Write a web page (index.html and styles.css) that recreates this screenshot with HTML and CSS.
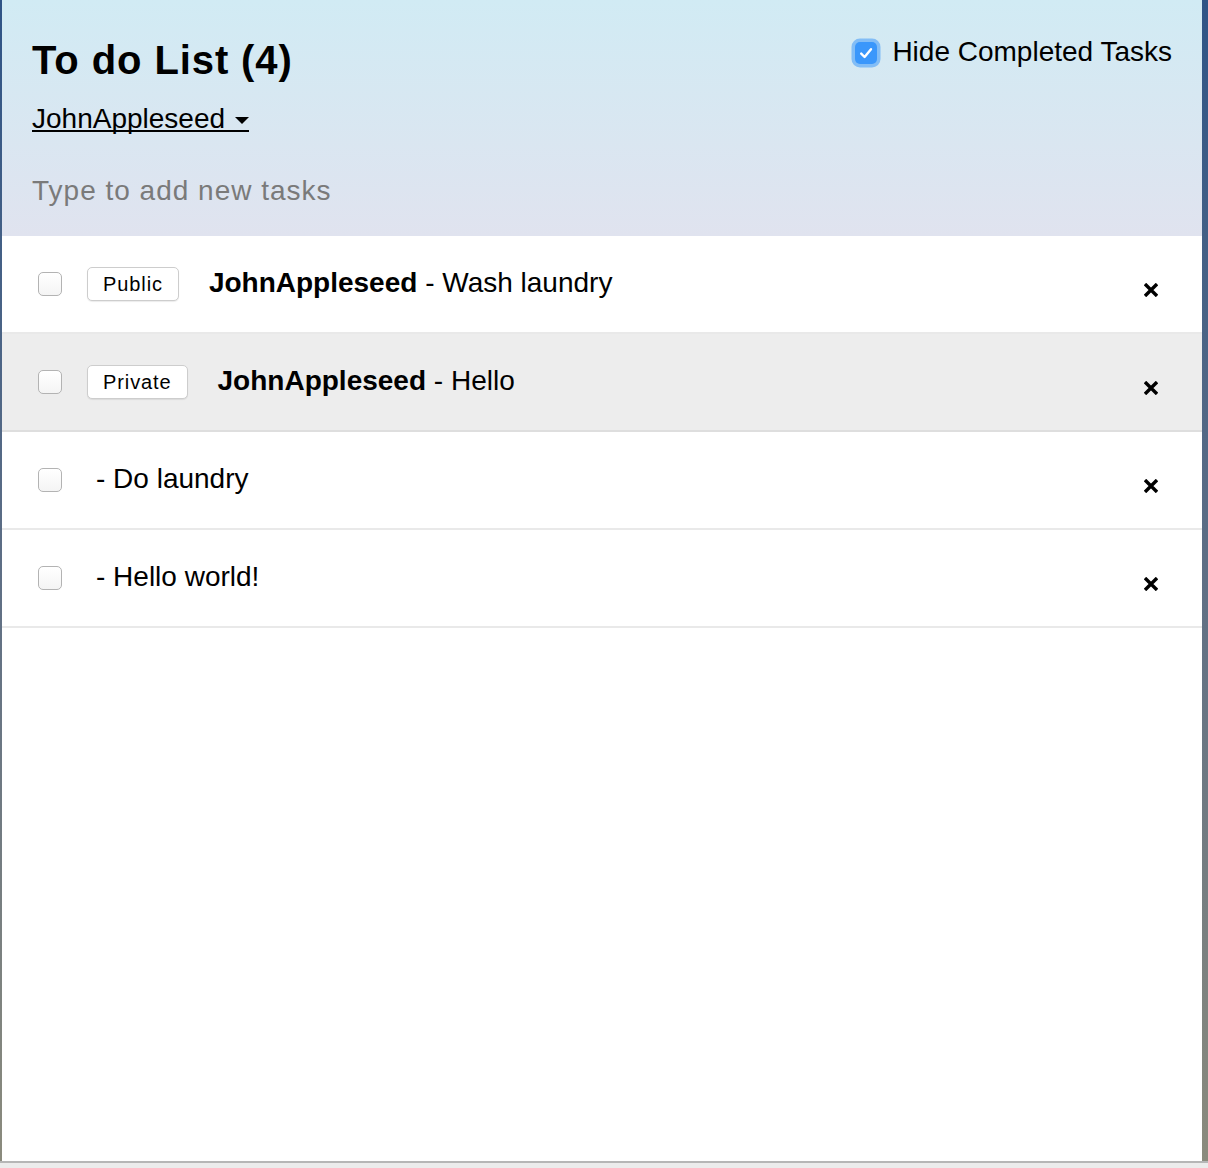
FILE: index.html
```html
<!DOCTYPE html>
<html lang="en">
<head>
<meta charset="utf-8">
<title>To do List</title>
<link rel="stylesheet" href="styles.css">
</head>
<body>
<div class="frame">
  <div class="app">
    <header class="header">
      <div class="header-top">
        <h1 class="title">To do List (4)</h1>
        <label class="hide-completed">
          <span class="hide-box">
            <svg viewBox="0 0 22 22" width="22" height="22"><path d="M6.2 11.6 L9.6 15 L16 7.2" fill="none" stroke="#fff" stroke-width="2.4" stroke-linecap="round" stroke-linejoin="round"/></svg>
          </span>
          <span class="hide-text">Hide Completed Tasks</span>
        </label>
      </div>
      <div class="user-row">
        <a class="user-link" href="#">JohnAppleseed<span class="caret"></span></a>
      </div>
      <form class="new-task">
        <input class="new-task-input" type="text" placeholder="Type to add new tasks">
      </form>
    </header>
    <ul class="tasks">
      <li class="task">
        <input class="check" type="checkbox">
        <button class="badge" type="button">Public</button>
        <span class="task-text with-badge"><strong>JohnAppleseed</strong> - Wash laundry</span>
        <button class="delete" type="button" aria-label="Delete">
          <svg viewBox="0 0 14 14" width="14" height="14"><path d="M2.2 2.2 L11.8 11.8 M11.8 2.2 L2.2 11.8" stroke="#000" stroke-width="3.4" stroke-linecap="square"/></svg>
        </button>
      </li>
      <li class="task private">
        <input class="check" type="checkbox">
        <button class="badge" type="button">Private</button>
        <span class="task-text with-badge"><strong>JohnAppleseed</strong> - Hello</span>
        <button class="delete" type="button" aria-label="Delete">
          <svg viewBox="0 0 14 14" width="14" height="14"><path d="M2.2 2.2 L11.8 11.8 M11.8 2.2 L2.2 11.8" stroke="#000" stroke-width="3.4" stroke-linecap="square"/></svg>
        </button>
      </li>
      <li class="task">
        <input class="check" type="checkbox">
        <span class="task-text">- Do laundry</span>
        <button class="delete" type="button" aria-label="Delete">
          <svg viewBox="0 0 14 14" width="14" height="14"><path d="M2.2 2.2 L11.8 11.8 M11.8 2.2 L2.2 11.8" stroke="#000" stroke-width="3.4" stroke-linecap="square"/></svg>
        </button>
      </li>
      <li class="task">
        <input class="check" type="checkbox">
        <span class="task-text">- Hello world!</span>
        <button class="delete" type="button" aria-label="Delete">
          <svg viewBox="0 0 14 14" width="14" height="14"><path d="M2.2 2.2 L11.8 11.8 M11.8 2.2 L2.2 11.8" stroke="#000" stroke-width="3.4" stroke-linecap="square"/></svg>
        </button>
      </li>
    </ul>
  </div>
</div>
</body>
</html>
```

FILE: styles.css
```css
html, body {
  margin: 0;
  padding: 0;
}

body {
  background: #ececec;
  font-family: "Liberation Sans", Arial, Helvetica, sans-serif;
  color: #000;
}

.frame {
  height: 1163px;
  padding: 0 6px 0 2px;
  background: linear-gradient(to bottom, #2f5486 0%, #5f6f85 50%, #8b8b7d 100%);
  border-bottom: 2px solid #b6b6b6;
  box-sizing: border-box;
}

.app {
  height: 100%;
  background: #fff;
}

.header {
  display: flex;
  flex-direction: column;
  height: 236px;
  box-sizing: border-box;
  padding: 36px 30px 0 30px;
  background: linear-gradient(to bottom, #d1ebf4 0%, #e0e3ef 100%);
}

.header-top {
  display: flex;
  justify-content: space-between;
  align-items: flex-start;
}

.title {
  margin: 0;
  font-size: 40px;
  line-height: 48px;
  font-weight: bold;
  letter-spacing: 0.9px;
}

.hide-completed {
  display: flex;
  align-items: center;
  font-size: 28px;
  line-height: 32px;
  margin-top: 0;
}

.hide-box {
  display: flex;
  align-items: center;
  justify-content: center;
  width: 22px;
  height: 22px;
  border-radius: 5px;
  background: #3a97fb;
  box-shadow: 0 0 0 3.5px #82bdf6;
  margin-right: 15px;
  margin-top: 2px;
}

.hide-text {
  white-space: nowrap;
}

.user-row {
  margin-top: 21px;
  font-size: 28px;
  line-height: 27px;
}

.user-link {
  display: inline-block;
  color: #000;
  text-decoration: none;
  background: linear-gradient(#000, #000) no-repeat left bottom / 100% 2px;
}

.caret {
  display: inline-block;
  width: 0;
  height: 0;
  margin-left: 10px;
  border-top: 7px solid #000;
  border-left: 7.5px solid transparent;
  border-right: 7.5px solid transparent;
  vertical-align: 4px;
}

.new-task {
  margin-top: 39px;
}

.new-task-input {
  display: block;
  width: 100%;
  height: 40px;
  padding: 0;
  border: 0;
  outline: none;
  background: transparent;
  font-family: "Liberation Sans", Arial, Helvetica, sans-serif;
  font-size: 28px;
  letter-spacing: 1px;
  color: #000;
}

.new-task-input::placeholder {
  color: #7a7a7a;
}

.tasks {
  list-style: none;
  margin: 0;
  padding: 0;
}

.task {
  display: flex;
  align-items: center;
  height: 98px;
  box-sizing: border-box;
  padding-left: 36px;
  padding-right: 44px;
  border-bottom: 2px solid #e9e9e9;
  font-size: 28px;
  line-height: 32px;
}

.task.private {
  background: #ededed;
  border-bottom-color: #dedede;
}

.check {
  -webkit-appearance: none;
  appearance: none;
  width: 24px;
  height: 24px;
  margin: 0;
  border: 1px solid #b3b3b3;
  border-radius: 5px;
  background: linear-gradient(to bottom, #ffffff, #f4f4f4);
  box-sizing: border-box;
  flex: none;
}

.badge {
  margin: 0 0 0 25px;
  padding: 0 15px;
  height: 34px;
  border: 1px solid #cdcdcd;
  border-radius: 5px;
  background: #fff;
  box-shadow: 0 1px 1px rgba(0, 0, 0, 0.08);
  font-family: "Liberation Sans", Arial, Helvetica, sans-serif;
  font-size: 20px;
  letter-spacing: 0.9px;
  color: #000;
  flex: none;
}

.task-text {
  margin-left: 34px;
  margin-top: -2px;
  white-space: nowrap;
}

.task-text.with-badge {
  margin-left: 30px;
}

.task-text strong {
  font-weight: bold;
}

.delete {
  margin: 12px 0 0 auto;
  padding: 0;
  border: 0;
  background: transparent;
  width: 14px;
  height: 14px;
  display: flex;
}
```
